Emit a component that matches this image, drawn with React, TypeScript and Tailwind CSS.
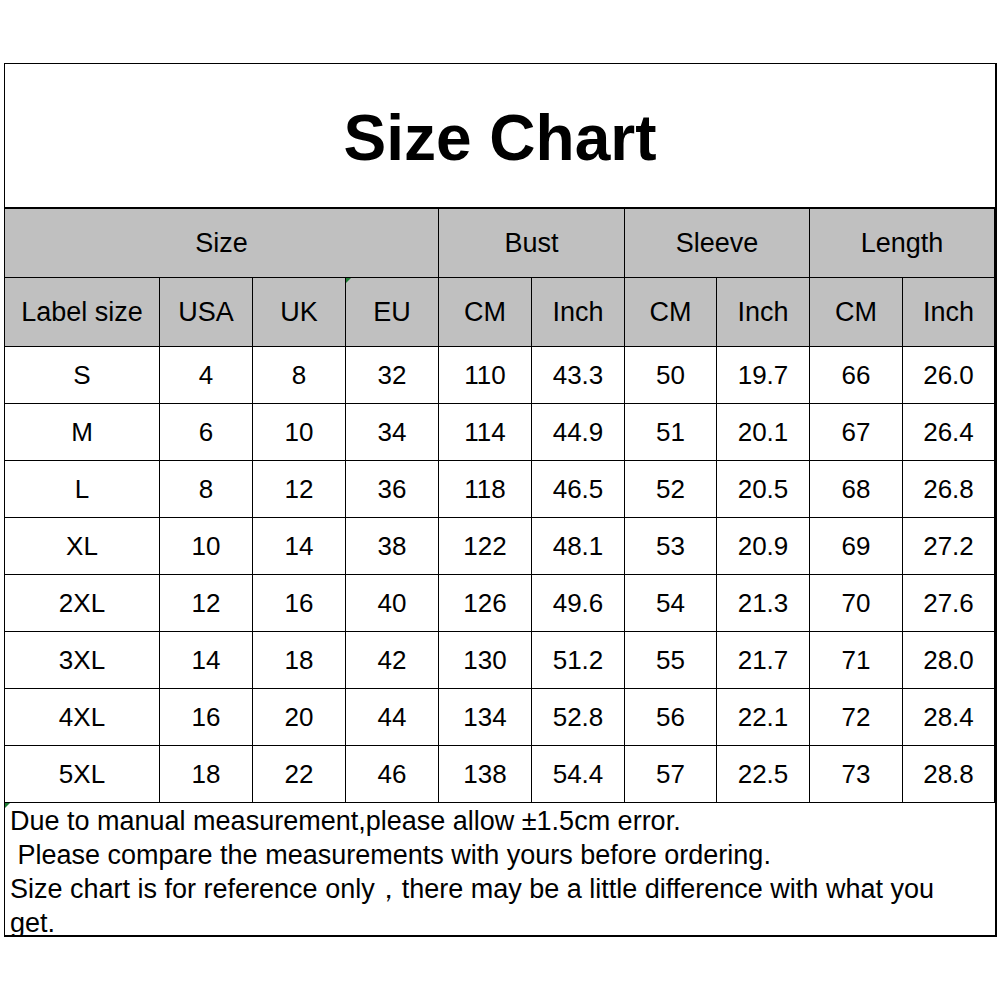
const rows = [
  ["S", "4", "8", "32", "110", "43.3", "50", "19.7", "66", "26.0"],
  ["M", "6", "10", "34", "114", "44.9", "51", "20.1", "67", "26.4"],
  ["L", "8", "12", "36", "118", "46.5", "52", "20.5", "68", "26.8"],
  ["XL", "10", "14", "38", "122", "48.1", "53", "20.9", "69", "27.2"],
  ["2XL", "12", "16", "40", "126", "49.6", "54", "21.3", "70", "27.6"],
  ["3XL", "14", "18", "42", "130", "51.2", "55", "21.7", "71", "28.0"],
  ["4XL", "16", "20", "44", "134", "52.8", "56", "22.1", "72", "28.4"],
  ["5XL", "18", "22", "46", "138", "54.4", "57", "22.5", "73", "28.8"],
];

const subHeads = ["Label size", "USA", "UK", "EU", "CM", "Inch", "CM", "Inch", "CM", "Inch"];

const Corner = () => (
  <span className="absolute left-0 top-0 w-0 h-0 border-t-[5px] border-r-[5px] border-t-[#1e7b34] border-r-transparent" />
);

export default function App() {
  return (
    <div className="w-[1001px] h-[1001px] overflow-hidden pt-[63px] pl-[4px] bg-white text-black font-['Liberation_Sans',Arial,sans-serif]">
      <div className="w-[993px] border-l border-t border-r-2 border-b-2 border-black">
        <div className="h-[145px] flex items-center justify-center border-b-2 border-black">
          <h1 className="text-[64px] font-bold leading-none pt-[4px]">Size Chart</h1>
        </div>
        <div className="grid grid-cols-[154px_92px_92px_92px_92px_92px_91px_92px_92px_91px] grid-rows-[68px_68px_repeat(8,56px)] gap-px bg-black border-b border-black text-[26px]">
          <div className="col-span-4 bg-[#c0c0c0] flex items-center justify-center text-[27px]">Size</div>
          <div className="col-span-2 bg-[#c0c0c0] flex items-center justify-center text-[27px]">Bust</div>
          <div className="col-span-2 bg-[#c0c0c0] flex items-center justify-center text-[27px]">Sleeve</div>
          <div className="col-span-2 bg-[#c0c0c0] flex items-center justify-center text-[27px]">Length</div>
          {subHeads.map((h, i) => (
            <div key={i} className="relative bg-[#c0c0c0] flex items-center justify-center text-[27px]">
              {i === 3 && <Corner />}
              {h}
            </div>
          ))}
          {rows.map((r, ri) =>
            r.map((c, ci) => (
              <div key={ri + "-" + ci} className="bg-white flex items-center justify-center">
                {c}
              </div>
            ))
          )}
        </div>
        <div className="relative h-[132px] overflow-hidden pl-[5px] pt-[1px] text-[27px] leading-[34px] whitespace-pre">
          <Corner />
          <div>Due to manual measurement,please allow ±1.5cm error.</div>
          <div> Please compare the measurements with yours before ordering.</div>
          <div>Size chart is for reference only，there may be a little difference with what you</div>
          <div>get.</div>
        </div>
      </div>
    </div>
  );
}
